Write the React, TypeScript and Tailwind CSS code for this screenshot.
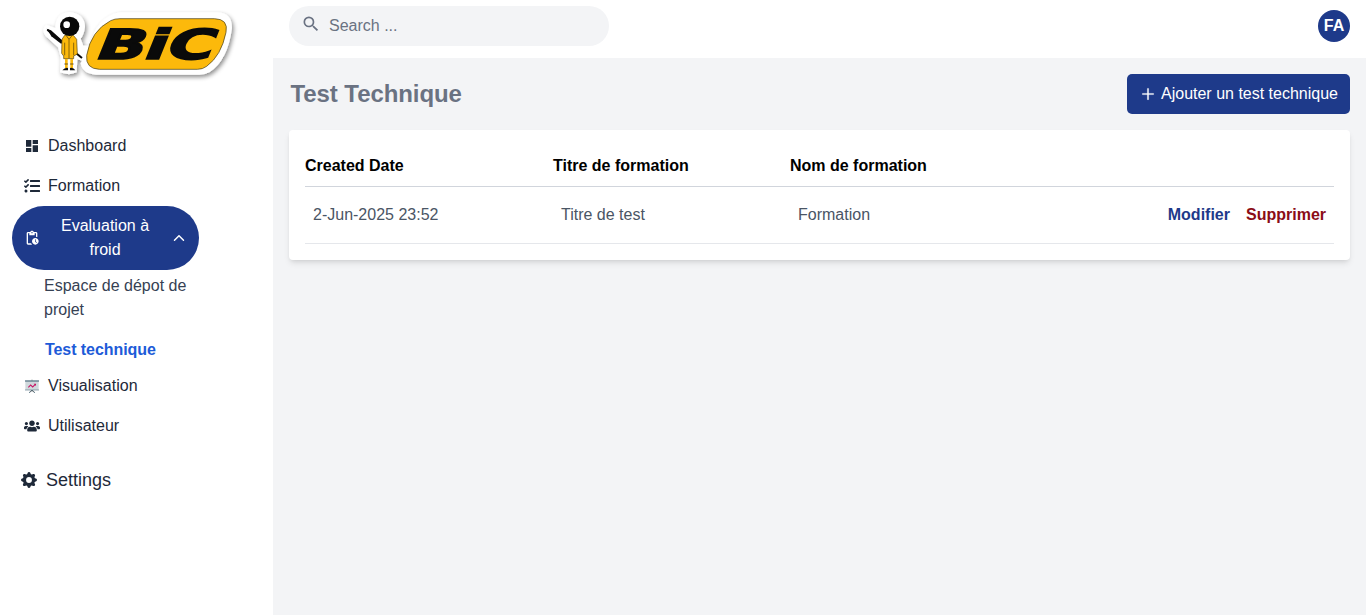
import type { ReactNode } from "react";
import { MdDashboard, MdPendingActions, MdSearch } from "react-icons/md";
import { FaTasks, FaUsers } from "react-icons/fa";
import { BsGearFill } from "react-icons/bs";
import { FcStatistics } from "react-icons/fc";
import { AiOutlinePlus } from "react-icons/ai";
import { IoIosArrowUp } from "react-icons/io";

function Logo() {
  return (
    <svg viewBox="0 0 630 252" className="block h-[84px] w-[210px]" aria-label="BiC">
      <defs>
        <filter id="soft" x="-10%" y="-10%" width="125%" height="130%">
          <feDropShadow dx="5" dy="7" stdDeviation="6" floodColor="#000" floodOpacity="0.45" />
        </filter>
      </defs>
      <g filter="url(#soft)" fill="#fff">
        <path d="M250 25H545Q588 27 588 72Q575 170 520 205Q508 212 490 212H180Q140 210 134 178L138 170L124 166L122 205Q100 216 72 205L74 160L66 130L28 95Q16 75 30 62L58 72Q58 28 100 24Q145 28 147 68Q144 92 134 104L142 125L162 125Q180 40 250 25Z" />
      </g>
      <path
        d="M252 44H535Q578 45 570 85Q556 155 512 187Q500 196 484 196H190Q148 194 152 154Q165 80 224 50Q236 44 252 44Z"
        fill="#fcb90b"
        stroke="#3d3512"
        strokeWidth="2"
      />
      <text
        transform="translate(171 164) skewX(-22) scale(1.56 1)"
        fontFamily="DejaVu Sans"
        fontWeight="700"
        fontSize="124"
        textLength="226"
        lengthAdjust="spacing"
        fill="#0a0a0a"
        stroke="#0a0a0a"
        strokeWidth="5"
      >
        BiC
      </text>
      <path d="M34 77L138 162" stroke="#0a0a0a" strokeWidth="6" />
      <path d="M32 74L45 79L80 110L76 120L46 97Z" fill="#0a0a0a" />
      <path d="M86 94H112L122 106L124 150L113 156V164H83V156L77 148L78 106Z" fill="#fcb90b" stroke="#5b470c" strokeWidth="2" />
      <path d="M90 94L99 106L109 94M99 106V163M86 116V154M113 116V154" fill="none" stroke="#4b3a09" strokeWidth="2" />
      <path d="M91 165V192M107 165V192" stroke="#fcb90b" strokeWidth="8" />
      <path d="M85 180H96M102 180H113" stroke="#222" strokeWidth="2" />
      <path d="M79 199Q88 189 96 192V199ZM102 192Q112 189 118 199H102Z" fill="#111" />
      <circle cx="101" cy="67" r="29" fill="#080808" />
      <circle cx="92" cy="62" r="10" fill="#fff" />
    </svg>
  );
}

function NavItem({ icon, label }: { icon: ReactNode; label: string }) {
  return (
    <a className="flex h-10 items-center gap-2 pl-6 text-base text-gray-800">
      {icon}
      <span>{label}</span>
    </a>
  );
}

function Sidebar() {
  return (
    <aside className="w-[273px] shrink-0 bg-white pt-1">
      <div className="pl-9">
        <Logo />
      </div>
      <nav className="pt-[38px]">
        <NavItem icon={<MdDashboard size={16} />} label="Dashboard" />
        <NavItem icon={<FaTasks size={16} />} label="Formation" />
        <button className="ml-3 flex h-16 w-[187px] items-center rounded-[32px] bg-[#1e3a8a] pl-3 pr-3 text-base text-white">
          <MdPendingActions size={16} className="shrink-0" />
          <span className="flex-1 pl-[7px] pr-2 text-center">Evaluation à froid</span>
          <IoIosArrowUp size={16} className="shrink-0" />
        </button>
        <div className="ml-11 w-[150px] pt-1 text-gray-700">
          <a className="block">Espace de dépot de projet</a>
          <a className="mt-4 block pl-px font-bold tracking-[-0.06px] text-[#1d5bd8]">Test technique</a>
        </div>
        <div className="mt-1">
          <NavItem icon={<FcStatistics size={16} />} label="Visualisation" />
          <NavItem icon={<FaUsers size={16} />} label="Utilisateur" />
        </div>
        <a className="mt-5 flex items-center gap-2 pl-[21px] text-lg text-gray-800">
          <BsGearFill size={16} />
          <span className="pl-px">Settings</span>
        </a>
      </nav>
    </aside>
  );
}

export default function App() {
  return (
    <div className="flex h-[615px] w-full overflow-hidden bg-[#f3f4f6] font-['Liberation_Sans',Arial,sans-serif]">
      <Sidebar />
      <div className="min-w-0 flex-1">
        <header className="flex h-[58px] items-start justify-between bg-white pl-4 pr-4 pt-1.5">
          <label className="flex h-10 w-80 items-center rounded-full bg-[#f3f4f6] pl-3">
            <MdSearch size={20} className="mb-1 text-gray-500" />
            <input
              placeholder="Search ..."
              className="ml-2 w-60 bg-transparent text-base outline-none placeholder:text-gray-500"
            />
          </label>
          <div className="mt-1 flex size-8 items-center justify-center rounded-full bg-[#1e3a8a] font-bold text-white">
            FA
          </div>
        </header>
        <main className="px-4 pt-4">
          <div className="flex h-10 items-center justify-between">
            <h1 className="pl-[1.5px] text-2xl font-bold tracking-[-0.08px] text-gray-500">Test Technique</h1>
            <button className="flex h-10 w-[223px] items-center rounded-[5px] bg-[#1e3a8a] pl-[13px] text-white">
              <AiOutlinePlus size={16} className="stroke-white stroke-[24]" />
              <span className="whitespace-nowrap pl-[5px]">Ajouter un test technique</span>
            </button>
          </div>
          <section className="mt-4 h-[130px] rounded bg-white px-4 pt-4 shadow-md">
            <table className="w-full table-fixed border-collapse text-left">
              <colgroup>
                <col className="w-[248px]" />
                <col className="w-[237px]" />
                <col className="w-[300px]" />
                <col />
              </colgroup>
              <thead>
                <tr className="h-10 border-b border-gray-300 text-black">
                  <th className="pb-0 font-bold">Created Date</th>
                  <th className="pb-0 font-bold">Titre de formation</th>
                  <th className="pb-0 font-bold">Nom de formation</th>
                  <th />
                </tr>
              </thead>
              <tbody>
                <tr className="h-[57px] border-b border-gray-200 text-gray-600">
                  <td className="px-2">2-Jun-2025 23:52</td>
                  <td className="px-2">Titre de test</td>
                  <td className="px-2">Formation</td>
                  <td className="px-2">
                    <div className="flex justify-end gap-4 font-bold">
                      <a className="text-[#1e3a8a]">Modifier</a>
                      <a className="text-[#8b0d17]">Supprimer</a>
                    </div>
                  </td>
                </tr>
              </tbody>
            </table>
          </section>
        </main>
      </div>
    </div>
  );
}
